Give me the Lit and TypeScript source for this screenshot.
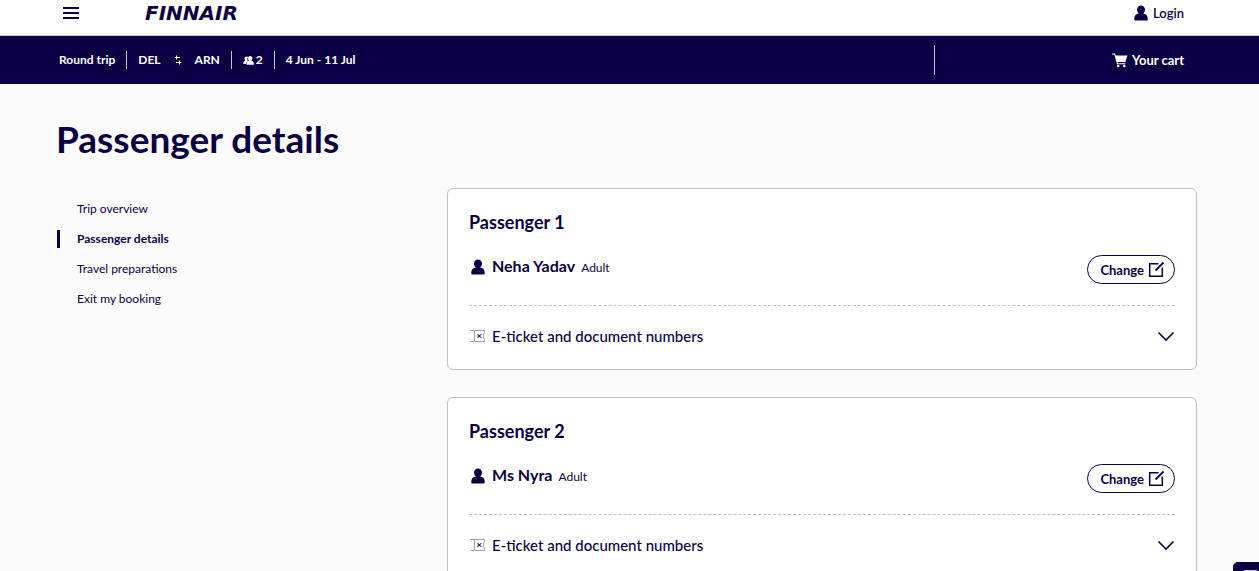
import { LitElement, html, css } from "lit";
import { customElement, property, state } from "lit/decorators.js";

const personIcon = html`<svg class="person" viewBox="0 0 16 16" width="16" height="16" aria-hidden="true">
  <path fill="currentColor" d="M8 .4c2.400 0 4 1.700 4 4.100 0 1.800-.8 3.300-1.900 4.100 2.900.5 4.600 2 4.600 4.900v1.300q0 .8-.8.8H2.100q-.8 0-.8-.8v-1.300c0-2.900 1.700-4.400 4.600-4.900C4.800 7.800 4 6.300 4 4.500 4 2.100 5.600.4 8 .4z"/>
</svg>`;

const reset = css`
  * { box-sizing: border-box; }
  h1, h2, p, ul { margin: 0; padding: 0; font-weight: inherit; }
  ul { list-style: none; }
  a { color: inherit; text-decoration: none; }
  button { font: inherit; color: inherit; background: none; border: 0; padding: 0; cursor: pointer; }
  svg { display: block; flex: none; }
`;

@customElement("site-header")
class SiteHeader extends LitElement {
  static styles = [reset, css`
    :host { display: block; background: #fff; border-bottom: 1px solid #c9c7d6; }
    .bar { display: flex; align-items: center; height: 35px; padding: 0 75px 9px 63px; }
    .logo { margin-left: 66px; font: italic 700 20px/26px "DejaVu Sans", sans-serif; }
    .login { margin-left: auto; display: flex; align-items: center; gap: 4px; font-size: 13px; line-height: 26px; font-weight: 600; }
  `];
  render() {
    return html`<header class="bar">
      <button aria-label="Menu">
        <svg width="16" height="12" viewBox="0 0 16 12"><path d="M0 1h16M0 6h16M0 11h16" stroke="currentColor" stroke-width="2"/></svg>
      </button>
      <a class="logo" href="#">FINNAIR</a>
      <a class="login" href="#">${personIcon}Login</a>
    </header>`;
  }
}

@customElement("trip-bar")
class TripBar extends LitElement {
  static styles = [reset, css`
    :host { display: block; background: #0b0043; color: #fff; font-size: 12px; line-height: 18px; font-weight: 700; }
    .bar { display: flex; align-items: center; height: 48px; padding: 0 75px 0 59px; }
    .item { display: flex; align-items: center; padding: 0 11px; border-left: 1px solid #c9c7d6; }
    .item:first-child { padding-left: 0; border: 0; }
    .route { gap: 13px; }
    .pax { gap: 2px; }
    .cart { display: flex; align-items: center; justify-content: flex-end; gap: 4px; width: 250px; height: 30px; margin-left: auto; border-left: 1px solid #c9c7d6; font-size: 13px; }
  `];
  render() {
    return html`<div class="bar">
      <span class="item">Round trip</span>
      <span class="item route">DEL
        <svg width="8" height="10" viewBox="0 0 8 10" fill="none" stroke="currentColor"><path d="M6 2.500H.8M2.500.5v4M2 7.500h5.200M5.500 5.500v4"/></svg>
        ARN</span>
      <span class="item pax">
        <svg width="11" height="11" viewBox="0 0 11 11" fill="currentColor"><path d="M3.500 1.500c-1.400 0-2 1-2 2.200 0 .9.300 1.600.9 2C1 6 .4 6.700.4 8.300v.7h2.800c.1-1.500.8-2.300 1.800-2.700-1-1.500-.9-3 .2-4.300-.4-.3-.9-.5-1.700-.5z"/><path d="M7.200 1c-1.400 0-2.200 1-2.200 2.300 0 1.200.4 2 1.100 2.500-1.600.3-2.500 1.200-2.500 3v1h7.200v-1c0-1.800-.9-2.700-2.500-3C9 5.300 9.400 4.500 9.400 3.300 9.400 2 8.600 1 7.200 1z"/></svg>
        2</span>
      <span class="item">4 Jun - 11 Jul</span>
      <a class="cart" href="#">
        <svg width="16" height="15" viewBox="0 0 16 15"><path fill="currentColor" d="M0 .5h3l.7 2H15.500L13.300 9H5.500l.4 1.200h7.600v1H5L2.300 1.600H0z"/><circle cx="6.200" cy="13" r="1.300" fill="currentColor"/><circle cx="12.200" cy="13" r="1.300" fill="currentColor"/></svg>
        Your cart</a>
    </div>`;
  }
}

@customElement("passenger-card")
class PassengerCard extends LitElement {
  @property() heading = "";
  @property() name = "";
  @state() open = false;
  static styles = [reset, css`
    :host { display: block; background: #fff; border: 1px solid #bfbcd4; border-radius: 6px; padding: 21px; }
    .heading { font-size: 18px; line-height: 24px; font-weight: 700; }
    .row { display: flex; align-items: center; justify-content: space-between; padding: 21px 0; border-bottom: 1px dashed #bfbcd4; }
    .who { display: flex; align-items: center; padding: 0 0 6px 1px; line-height: 21px; }
    .label { display: flex; align-items: baseline; gap: 6px; margin-left: 6px; }
    .name { font-size: 16px; font-weight: 700; }
    .type { font-size: 12px; }
    .change { display: flex; align-items: center; gap: 4px; height: 29px; padding: 0 9px 0 12px; border: 1px solid #0b0043; border-radius: 15px; font-size: 13px; font-weight: 700; }
    .docs { display: flex; align-items: center; gap: 6px; width: 100%; padding: 19px 0 0; font-size: 15px; line-height: 23px; font-weight: 500; text-align: left; }
    .docs .chev { margin-left: auto; }
    .docs .chev.up { transform: rotate(180deg); }
  `];
  render() {
    return html`<h2 class="heading">${this.heading}</h2>
      <div class="row">
        <p class="who">${personIcon}<span class="label"><span class="name">${this.name}</span><span class="type">Adult</span></span></p>
        <button class="change">Change
          <svg width="17" height="17" viewBox="0 0 17 17" fill="none" stroke="currentColor" stroke-width="1.500"><path d="M10.500 2.700H1.700v12.600h12.600V6.500"/><path stroke-width="1.800" d="M7.500 9.500l8-8"/></svg>
        </button>
      </div>
      <button class="docs" aria-expanded=${this.open} @click=${() => (this.open = !this.open)}>
        <svg width="17" height="16" viewBox="0 0 17 16" fill="none" stroke="#a5a1c0"><path d="M1 1.500h14.500v2.500q-1 0-1 3t1 3v2.500H1M5.500 1.500v11"/><path stroke="#0b0043" d="M8.500 5l4 4M12.500 5l-4 4M8.500 7h2"/></svg>
        E-ticket and document numbers
        <svg class="chev ${this.open ? "up" : ""}" width="18" height="12" viewBox="0 0 18 12"><path fill="none" stroke="currentColor" stroke-width="1.600" d="M1.500 1.500 9 9l7.500-7.500"/></svg>
      </button>`;
  }
}

@customElement("app-root")
class AppRoot extends LitElement {
  static styles = [reset, css`
    :host { display: block; min-height: 100vh; background: #fbfbfb; color: #0b0043; font-family: Lato, "Open Sans", sans-serif; }
    .main { padding: 31px 62px 27px 56px; }
    .title { font-size: 37px; line-height: 48px; font-weight: 700; }
    .columns { display: grid; grid-template-columns: 13fr 25fr; align-items: start; margin: 25px 0 0 1px; }
    .steps { display: grid; gap: 12px; padding-top: 12px; font-size: 12px; line-height: 18px; }
    .steps a { display: block; padding-left: 17px; border-left: 3px solid transparent; }
    .steps .current { border-color: #0b0043; font-weight: 700; }
    .cards { display: grid; gap: 27px; }
    .chat { position: fixed; right: 0; bottom: 0; width: 26px; height: 9px; background: #0b0043; border-radius: 5px 0 0 0; overflow: hidden; }
    .chat svg { margin: 8px 0 0 11px; }
  `];
  render() {
    const steps = ["Trip overview", "Passenger details", "Travel preparations", "Exit my booking"];
    return html`<site-header></site-header>
      <trip-bar></trip-bar>
      <main class="main">
        <h1 class="title">Passenger details</h1>
        <div class="columns">
          <nav><ul class="steps">
            ${steps.map((s, i) => html`<li><a href="#" class=${i === 1 ? "current" : ""}>${s}</a></li>`)}
          </ul></nav>
          <div class="cards">
            <passenger-card heading="Passenger 1" name="Neha Yadav"></passenger-card>
            <passenger-card heading="Passenger 2" name="Ms Nyra"></passenger-card>
          </div>
        </div>
      </main>
      <button class="chat" aria-label="Chat"><svg width="13" height="1"><path d="M0 .5h13" stroke="#c9c7d6"/></svg></button>`;
  }
}
